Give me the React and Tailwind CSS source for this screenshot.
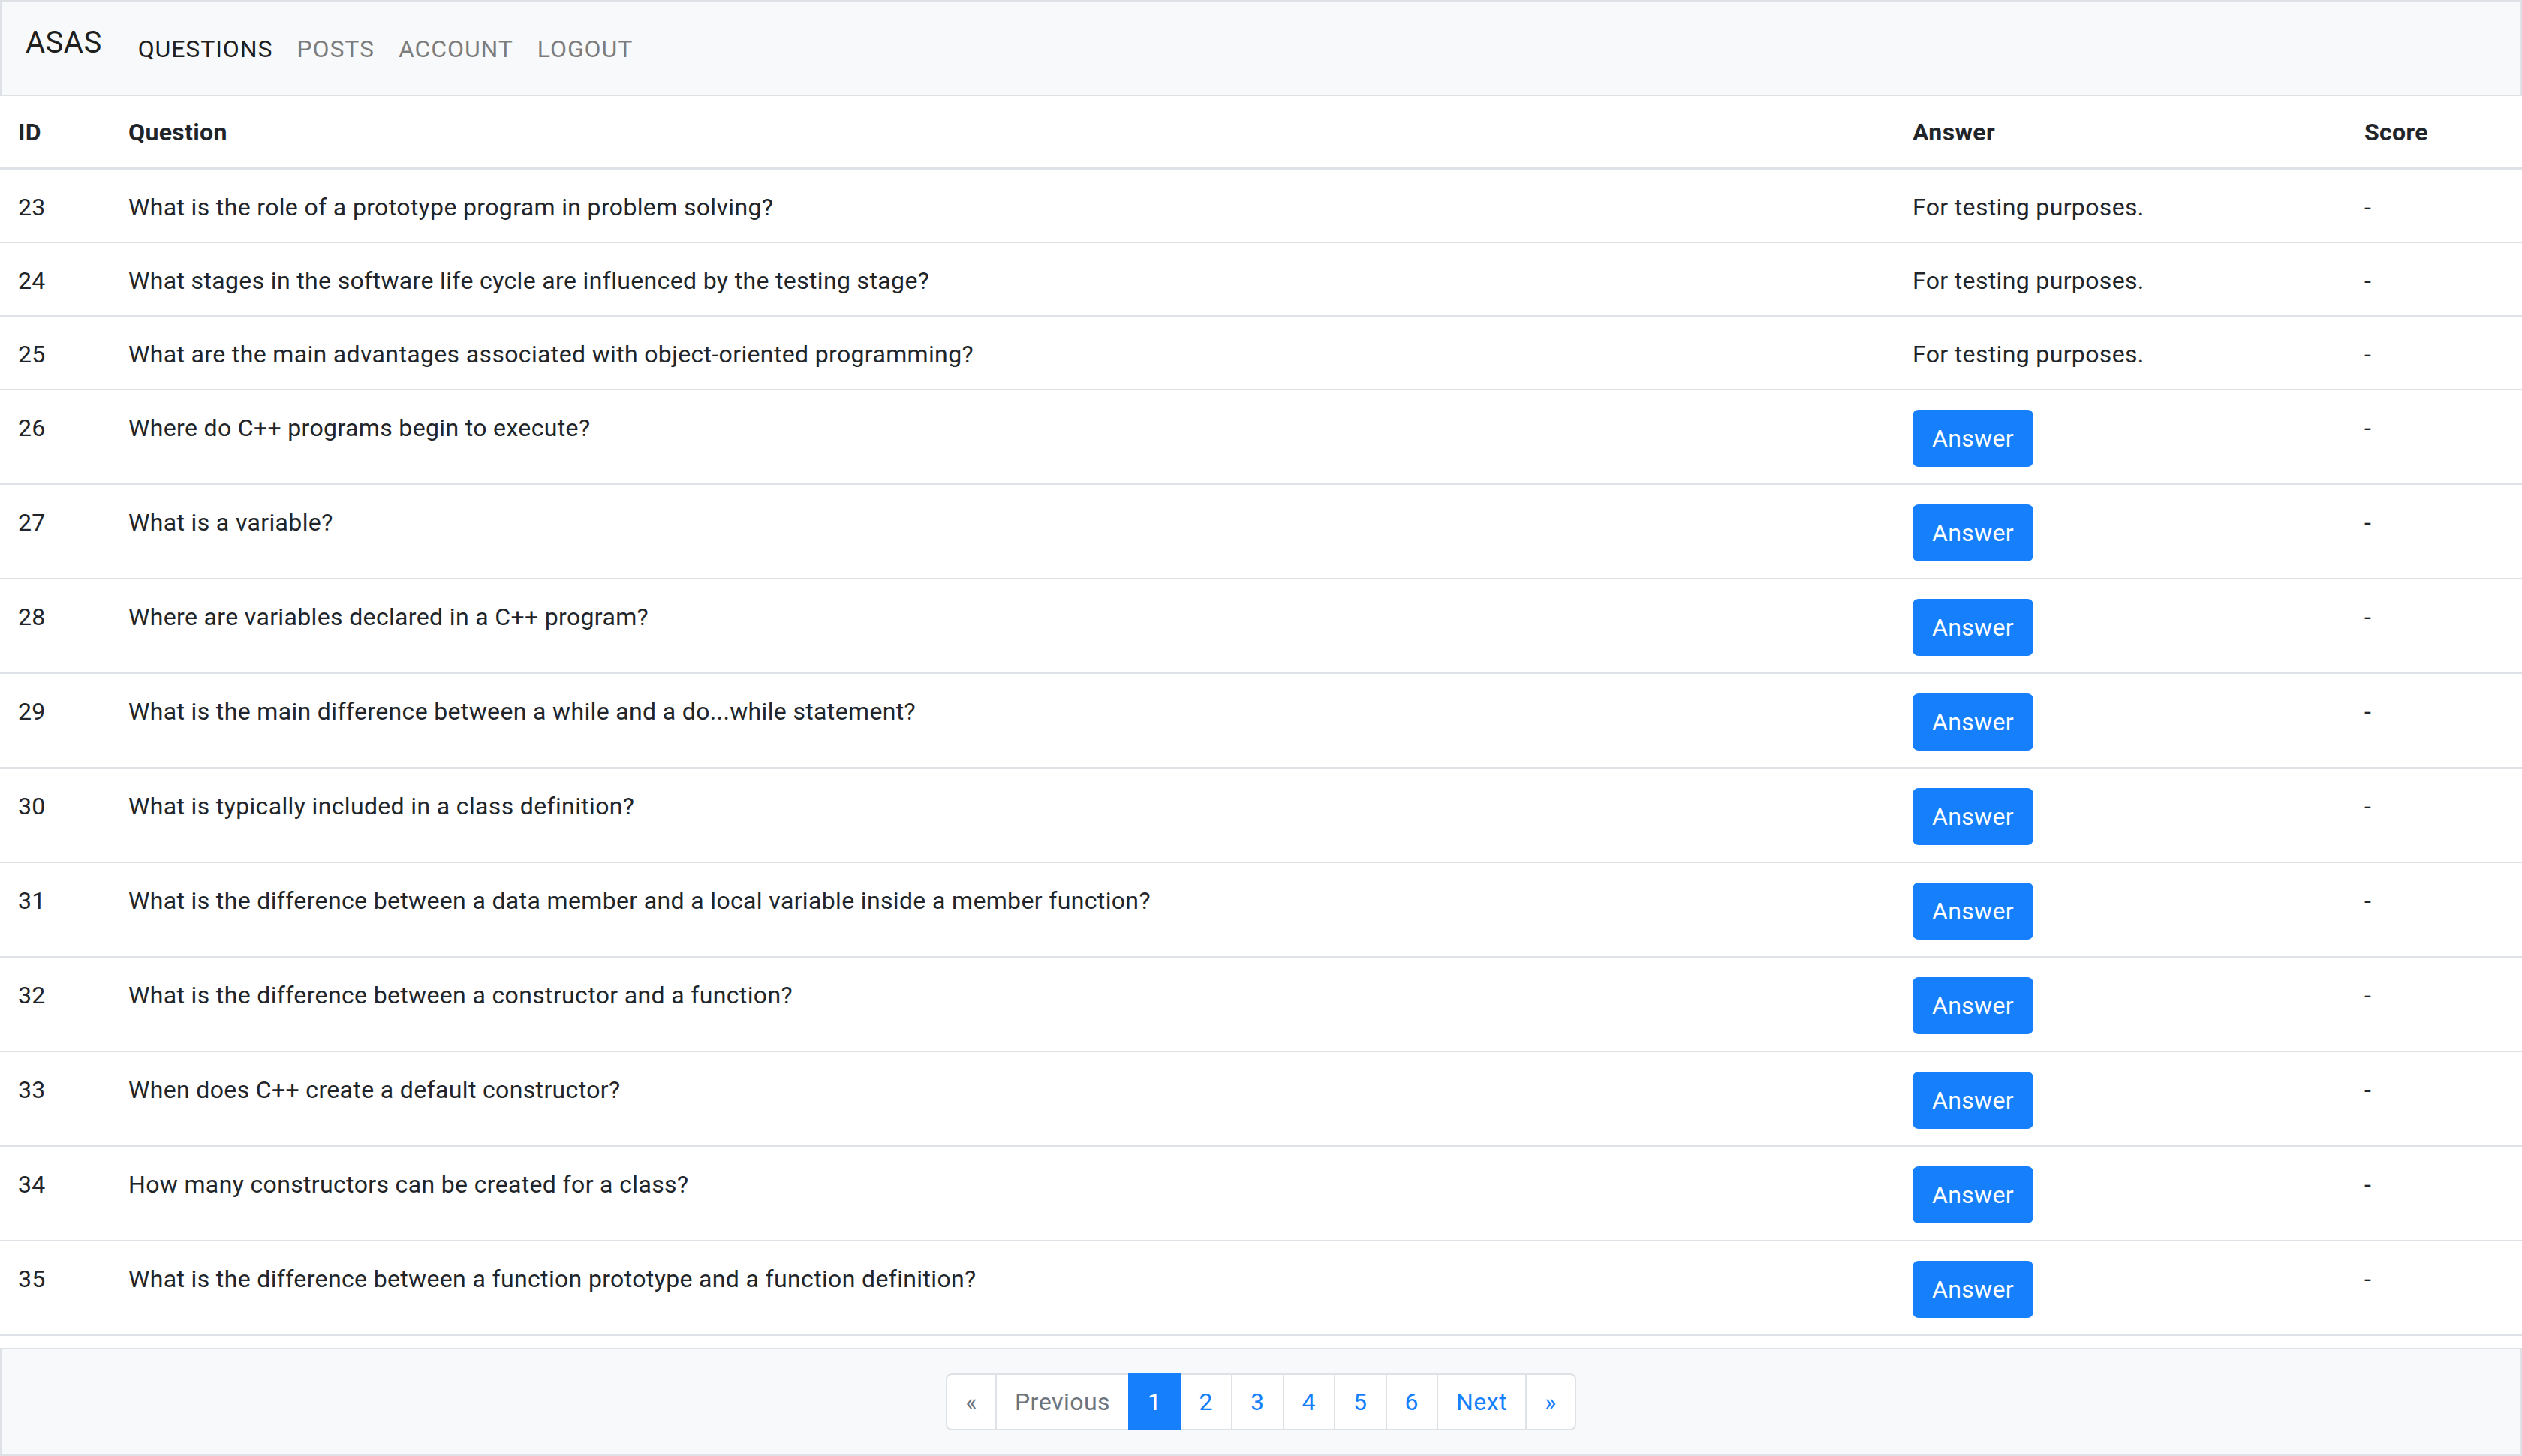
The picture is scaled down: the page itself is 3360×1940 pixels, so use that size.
import React from 'react';

const rows = [
  { id: 23, q: 'What is the role of a prototype program in problem solving?', a: 'For testing purposes.' },
  { id: 24, q: 'What stages in the software life cycle are influenced by the testing stage?', a: 'For testing purposes.' },
  { id: 25, q: 'What are the main advantages associated with object-oriented programming?', a: 'For testing purposes.' },
  { id: 26, q: 'Where do C++ programs begin to execute?' },
  { id: 27, q: 'What is a variable?' },
  { id: 28, q: 'Where are variables declared in a C++ program?' },
  { id: 29, q: 'What is the main difference between a while and a do...while statement?' },
  { id: 30, q: 'What is typically included in a class definition?' },
  { id: 31, q: 'What is the difference between a data member and a local variable inside a member function?' },
  { id: 32, q: 'What is the difference between a constructor and a function?' },
  { id: 33, q: 'When does C++ create a default constructor?' },
  { id: 34, q: 'How many constructors can be created for a class?' },
  { id: 35, q: 'What is the difference between a function prototype and a function definition?' },
];

const cols = 'grid grid-cols-[147px_2377px_602px_1fr]';

function App() {
  return (
    <div className="w-[3360px] h-[1940px] overflow-hidden bg-white text-[#212529] font-['Roboto',sans-serif]">
      {/* navbar */}
      <nav className="h-[128px] border-2 border-[#dee2e6] bg-[#f8f9fa] flex items-start px-[32px]">
        <a className="mt-[25px] text-[40px] leading-[60px] text-black/90 mr-8 tracking-[0.5px]">ASAS</a>
        <ul className="flex mt-[39px] text-[32px] leading-[48px] tracking-[0.9px]">
          <li className="px-4 text-black/90">QUESTIONS</li>
          <li className="px-4 text-black/50">POSTS</li>
          <li className="px-4 text-black/50">ACCOUNT</li>
          <li className="px-4 text-black/50">LOGOUT</li>
        </ul>
      </nav>

      {/* table */}
      <div className="text-[32px] leading-[48px] tracking-[0.35px]">
        <div className={`${cols} font-bold border-b-4 border-[#dee2e6]`}>
          <div className="px-6 pt-6 pb-[22px]">ID</div>
          <div className="px-6 pt-6 pb-[22px]">Question</div>
          <div className="px-6 pt-6 pb-[22px]">Answer</div>
          <div className="px-6 pt-6 pb-[22px]">Score</div>
        </div>
        {rows.map((r) => (
          <div key={r.id} className={`${cols} border-b-2 border-[#dee2e6]`}>
            <div className="px-6 pt-[26px] pb-[22px]">{r.id}</div>
            <div className="px-6 pt-[26px] pb-[22px]">{r.q}</div>
            <div className="px-6 pt-[26px] pb-[22px]">
              {r.a ? (
                r.a
              ) : (
                <button className="bg-[#167ffc] border-2 border-[#167ffc] text-white rounded-lg px-6 py-3 leading-[48px]">
                  Answer
                </button>
              )}
            </div>
            <div className="px-6 pt-[26px] pb-[22px]">-</div>
          </div>
        ))}
      </div>

      {/* footer pagination */}
      <footer className="mt-4 border-2 border-[#dee2e6] bg-[#f8f9fa] py-8 flex justify-center">
        <ul className="flex text-[32px] leading-[40px] tracking-[0.5px]">
          <li className="px-6 py-4 border-2 border-[#dee2e6] bg-white text-[#6c757d] rounded-l-lg">«</li>
          <li className="px-6 py-4 border-2 border-[#dee2e6] bg-white text-[#6c757d] -ml-[2px]">Previous</li>
          <li className="px-6 py-4 border-2 border-[#167ffc] bg-[#167ffc] text-white -ml-[2px] z-10">1</li>
          {['2', '3', '4', '5', '6', 'Next'].map((p) => (
            <li key={p} className="px-6 py-4 border-2 border-[#dee2e6] bg-white text-[#167ffc] -ml-[2px]">{p}</li>
          ))}
          <li className="px-6 py-4 border-2 border-[#dee2e6] bg-white text-[#167ffc] -ml-[2px] rounded-r-lg">»</li>
        </ul>
      </footer>
    </div>
  );
}

export default App;
